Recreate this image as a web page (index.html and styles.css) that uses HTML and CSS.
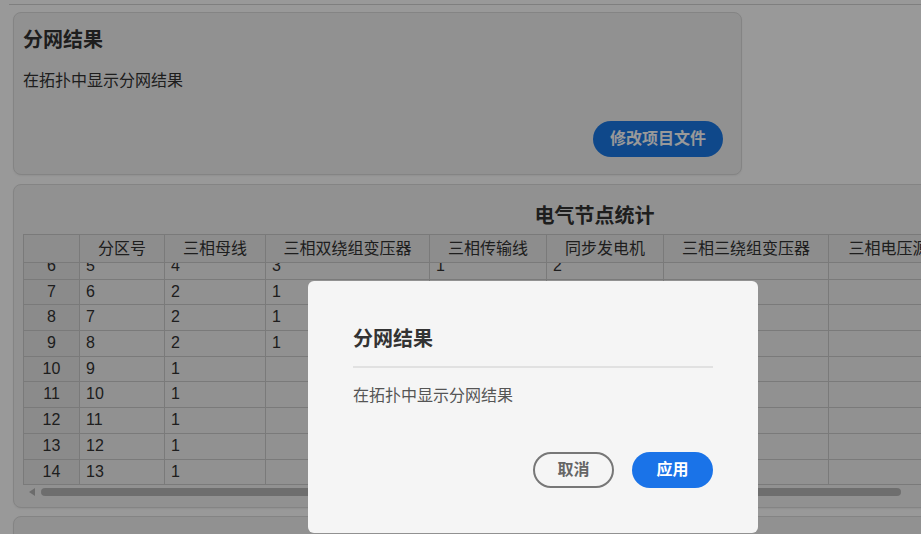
FILE: index.html
```html
<!DOCTYPE html>
<html lang="zh-CN">
<head>
<meta charset="utf-8">
<title>分网结果</title>
<link rel="stylesheet" href="styles.css">
</head>
<body>
<div class="page">
  <div class="prev"></div>

  <section class="card card-project">
    <h2 class="card-title">分网结果</h2>
    <p class="card-text">在拓扑中显示分网结果</p>
    <div class="card-actions">
      <button class="btn btn-primary btn-edit">修改项目文件</button>
    </div>
  </section>

  <section class="card card-stats">
    <h2 class="stats-title">电气节点统计</h2>
    <div class="table">
      <div class="row head">
        <div class="cell num"></div>
        <div class="cell">分区号</div>
        <div class="cell">三相母线</div>
        <div class="cell">三相双绕组变压器</div>
        <div class="cell">三相传输线</div>
        <div class="cell">同步发电机</div>
        <div class="cell">三相三绕组变压器</div>
        <div class="cell">三相电压源</div>
      </div>
      <div class="body-clip">
        <div class="rows">
          <div class="row"><div class="cell num">6</div><div class="cell">5</div><div class="cell">4</div><div class="cell">3</div><div class="cell">1</div><div class="cell">2</div><div class="cell"></div><div class="cell"></div></div>
          <div class="row"><div class="cell num">7</div><div class="cell">6</div><div class="cell">2</div><div class="cell">1</div><div class="cell"></div><div class="cell"></div><div class="cell"></div><div class="cell"></div></div>
          <div class="row"><div class="cell num">8</div><div class="cell">7</div><div class="cell">2</div><div class="cell">1</div><div class="cell"></div><div class="cell"></div><div class="cell"></div><div class="cell"></div></div>
          <div class="row"><div class="cell num">9</div><div class="cell">8</div><div class="cell">2</div><div class="cell">1</div><div class="cell"></div><div class="cell"></div><div class="cell"></div><div class="cell"></div></div>
          <div class="row"><div class="cell num">10</div><div class="cell">9</div><div class="cell">1</div><div class="cell"></div><div class="cell"></div><div class="cell"></div><div class="cell"></div><div class="cell"></div></div>
          <div class="row"><div class="cell num">11</div><div class="cell">10</div><div class="cell">1</div><div class="cell"></div><div class="cell"></div><div class="cell"></div><div class="cell"></div><div class="cell"></div></div>
          <div class="row"><div class="cell num">12</div><div class="cell">11</div><div class="cell">1</div><div class="cell"></div><div class="cell"></div><div class="cell"></div><div class="cell"></div><div class="cell"></div></div>
          <div class="row"><div class="cell num">13</div><div class="cell">12</div><div class="cell">1</div><div class="cell"></div><div class="cell"></div><div class="cell"></div><div class="cell"></div><div class="cell"></div></div>
          <div class="row"><div class="cell num">14</div><div class="cell">13</div><div class="cell">1</div><div class="cell"></div><div class="cell"></div><div class="cell"></div><div class="cell"></div><div class="cell"></div></div>
        </div>
      </div>
      <div class="hscroll">
        <span class="hscroll-arrow"></span>
        <span class="hscroll-thumb"></span>
      </div>
    </div>
  </section>

  <section class="card card-next"></section>
</div>

<div class="overlay"></div>

<div class="modal" role="dialog">
  <h3 class="modal-title">分网结果</h3>
  <div class="modal-divider"></div>
  <p class="modal-text">在拓扑中显示分网结果</p>
  <div class="modal-actions">
    <button class="btn btn-outline">取消</button>
    <button class="btn btn-primary btn-apply">应用</button>
  </div>
</div>
</body>
</html>
```

FILE: styles.css
```css
html, body {
  margin: 0;
  padding: 0;
  overflow: hidden;
  background: #ffffff;
}

body {
  font-family: "Liberation Sans", "Noto Sans CJK SC", sans-serif;
  font-size: 16px;
  color: #333333;
  width: 921px;
  height: 534px;
}

.page {
  width: 1200px;
  padding-left: 13px;
  box-sizing: border-box;
}

.prev {
  height: 4px;
  margin-left: -4px;
  border-bottom: 1px solid #d4d4d4;
}

.card {
  background: #f2f2f2;
  border: 1px solid #dcdcdc;
  border-radius: 8px;
  box-sizing: border-box;
  box-shadow: 0 1px 2px rgba(0, 0, 0, 0.06);
}

.card-project {
  width: 729px;
  margin-top: 7px;
  padding: 13px 18px 17px 9px;
}

.card-title {
  margin: 0;
  font-size: 20px;
  line-height: 28px;
  font-weight: 700;
  color: #333333;
}

.card-text {
  margin: 15px 0 0;
  font-size: 16px;
  line-height: 24px;
  color: #333333;
}

.card-actions {
  display: flex;
  justify-content: flex-end;
  margin-top: 28px;
}

.btn {
  font-family: "Liberation Sans", "Noto Sans CJK SC", sans-serif;
  font-size: 16px;
  font-weight: 700;
  height: 36px;
  border-radius: 18px;
  box-sizing: border-box;
  cursor: pointer;
  line-height: 1;
}

.btn-primary {
  background: #1a78e6;
  color: #ffffff;
  border: none;
}

.btn-edit {
  width: 130px;
  padding: 0;
}

.card-stats {
  width: 1164px;
  margin-top: 9px;
  padding: 17px 10px 9px 9px;
}

.stats-title {
  margin: 0;
  text-align: center;
  font-size: 20px;
  line-height: 28px;
  font-weight: 700;
  color: #333333;
}

.table {
  margin-top: 4px;
  overflow: hidden;
}

.row {
  display: grid;
  grid-template-columns: 56px 85px 101px 164px 117px 117px 165px 120px;
  width: max-content;
  border-left: 1px solid #cccccc;
}

.row .cell {
  border-right: 1px solid #cccccc;
  padding-left: 6px;
  white-space: nowrap;
  overflow: hidden;
}

.row.head {
  border-top: 1px solid #cccccc;
  border-bottom: 1px solid #cccccc;
  background: #ececec;
}

.row.head .cell {
  height: 27px;
  line-height: 27px;
  text-align: center;
  padding-left: 0;
  color: #333333;
}

.row .cell.num {
  text-align: center;
  padding-left: 0;
}

.body-clip {
  height: 223px;
  overflow: hidden;
}

.rows {
  margin-top: -9px;
}

.rows .row {
  border-bottom: 1px solid #cccccc;
  height: 25.7px;
  box-sizing: border-box;
}

.rows .cell {
  line-height: 24.7px;
  color: #333333;
}

.rows .cell.num {
  background: #e8e8e8;
}

.hscroll {
  height: 12px;
  display: flex;
  align-items: center;
  padding-left: 6px;
  gap: 6px;
}

.hscroll-arrow {
  width: 0;
  height: 0;
  border-top: 4px solid transparent;
  border-bottom: 4px solid transparent;
  border-right: 6px solid #b5b5b5;
}

.hscroll-thumb {
  width: 860px;
  height: 8px;
  border-radius: 4px;
  background: #b8b8b8;
}

.card-next {
  width: 1164px;
  height: 120px;
  margin-top: 8px;
}

.overlay {
  position: fixed;
  inset: 0;
  background: rgba(0, 0, 0, 0.4);
}

.modal {
  position: absolute;
  left: 308px;
  top: 281px;
  width: 450px;
  box-sizing: border-box;
  padding: 44px 45px 45px;
  background: #f5f5f5;
  border-radius: 6px;
}

.modal-title {
  margin: 0;
  font-size: 20px;
  line-height: 28px;
  font-weight: 700;
  color: #333333;
}

.modal-divider {
  height: 2px;
  margin-top: 13px;
  background: #e1e1e1;
}

.modal-text {
  margin: 16px 0 0;
  font-size: 16px;
  line-height: 24px;
  color: #555555;
}

.modal-actions {
  display: flex;
  justify-content: flex-end;
  gap: 18px;
  margin-top: 44px;
}

.btn-outline {
  width: 81px;
  background: transparent;
  border: 2px solid #777777;
  color: #666666;
}

.btn-apply {
  width: 81px;
  background: #1a73e8;
}
```
